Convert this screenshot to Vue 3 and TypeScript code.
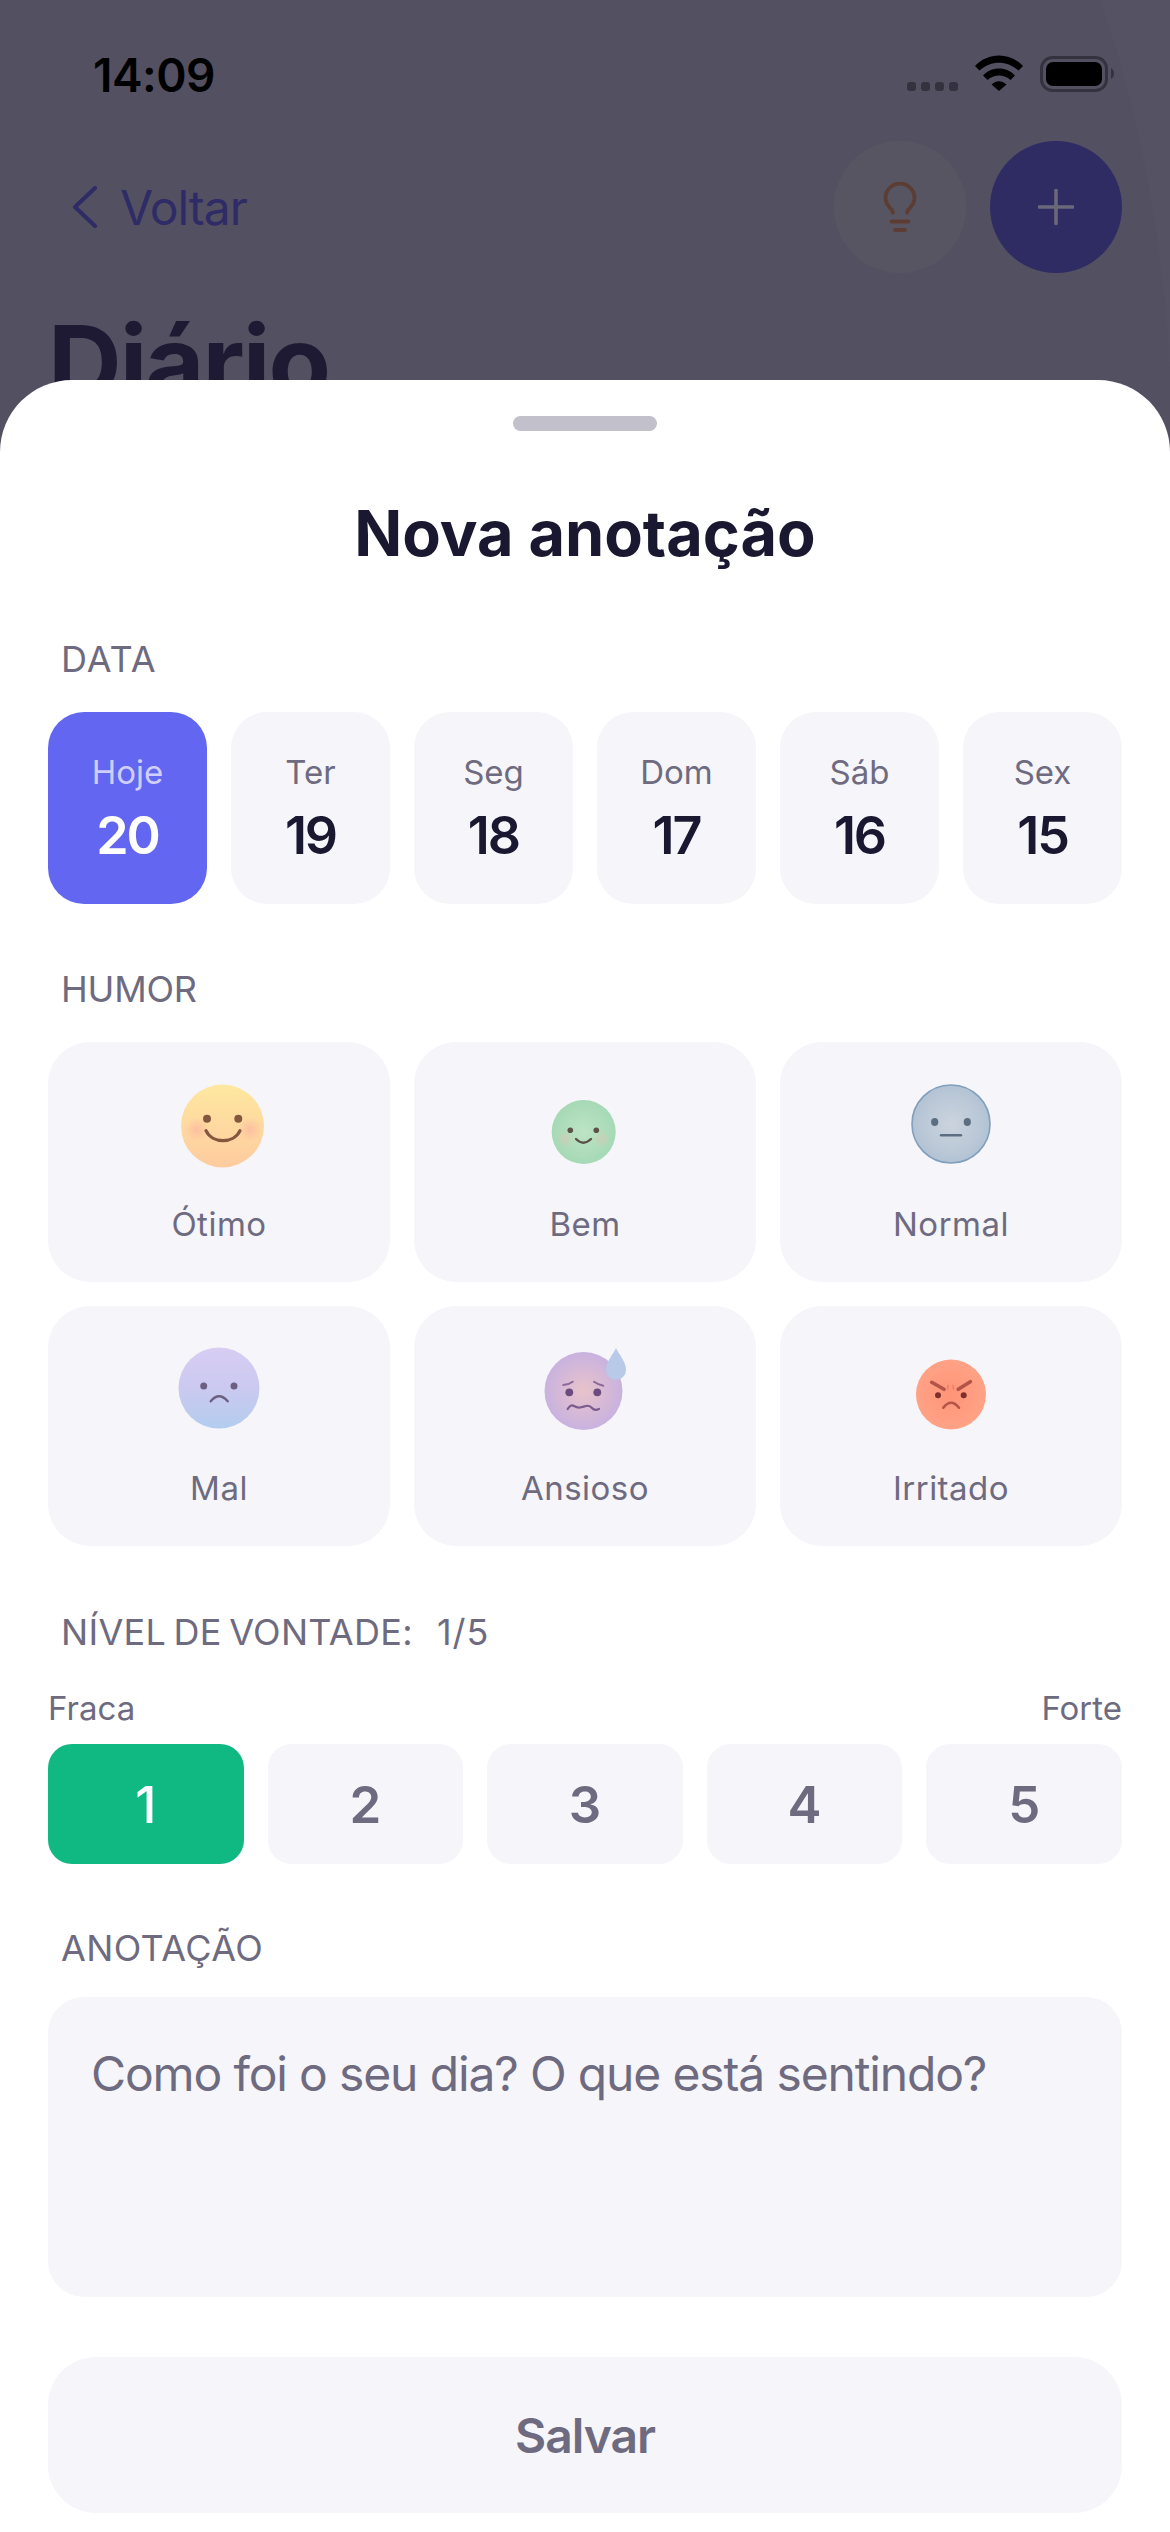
<script setup lang="ts">
const days = [
  { name: 'Hoje', num: 20, active: true },
  { name: 'Ter', num: 19, active: false },
  { name: 'Seg', num: 18, active: false },
  { name: 'Dom', num: 17, active: false },
  { name: 'Sáb', num: 16, active: false },
  { name: 'Sex', num: 15, active: false },
]
const moods = [
  { key: 'otimo', label: 'Ótimo' },
  { key: 'bem', label: 'Bem' },
  { key: 'normal', label: 'Normal' },
  { key: 'mal', label: 'Mal' },
  { key: 'ansioso', label: 'Ansioso' },
  { key: 'irritado', label: 'Irritado' },
]
const levels = [1, 2, 3, 4, 5]
</script>

<template>
  <div class="page">
    <svg class="edge" width="70" height="380" viewBox="0 0 70 380">
      <path d="M0 0 L70 0 L70 380 C65 250 40 110 0 0 Z" fill="#fff" opacity="0.012" />
    </svg>
    <div class="backdrop">
      <div class="status">
        <span class="time">14:09</span>
        <div class="status-icons">
          <svg width="52" height="10" viewBox="0 0 52 10" class="dots">
            <rect x="0" y="0" width="9" height="9" rx="3" />
            <rect x="14" y="0" width="9" height="9" rx="3" />
            <rect x="28" y="0" width="9" height="9" rx="3" />
            <rect x="42" y="0" width="9" height="9" rx="3" />
          </svg>
          <svg width="48" height="36" viewBox="0 0 48 36" class="wifi">
            <path d="M0 11 C13 -3 35 -3 48 11 L43.5 15.5 C32 5 16 5 4.5 15.5 Z" fill="#000" />
            <path d="M8 20.5 C16 11 32 11 40 20.5 L35.5 25 C29 19 19 19 12.5 25 Z" fill="#000" />
            <path d="M16.5 29.5 C21 25 27 25 31.5 29.5 L24 36 Z" fill="#000" />
          </svg>
          <svg width="75" height="36" viewBox="0 0 75 36" class="battery">
            <rect x="1.5" y="1.5" width="65" height="33" rx="11" fill="none" stroke="#35323f" stroke-width="3" />
            <rect x="6" y="6" width="56" height="24" rx="7" fill="#000" />
            <path d="M71 12 L71 23 C75 21 75 14 71 12 Z" fill="#35323f" />
          </svg>
        </div>
      </div>
      <div class="nav">
        <div class="back">
          <svg width="25" height="42" viewBox="0 0 25 42">
            <path d="M23 2 L3 21 L23 40" fill="none" stroke="#2e2b66" stroke-width="4" stroke-linecap="round" stroke-linejoin="round" />
          </svg>
          <span>Voltar</span>
        </div>
        <div class="nav-actions">
          <div class="round bulb">
            <svg width="36" height="51" viewBox="0 0 36 51">
              <path d="M11 30.5 C10 26 3.5 24 3.5 16 A14.5 14.5 0 0 1 32.5 16 C32.5 24 26 26 25 30.5" fill="none" stroke="#5c3d34" stroke-width="3.8" stroke-linecap="round" />
              <path d="M9.5 39.5 H26.5" fill="none" stroke="#5c3d34" stroke-width="3.8" stroke-linecap="round" />
              <path d="M13 48 H23" fill="none" stroke="#5c3d34" stroke-width="3.8" stroke-linecap="round" />
            </svg>
          </div>
          <div class="round plus">
            <svg width="36" height="36" viewBox="0 0 36 36">
              <path d="M18 1.5 V34.5 M1.5 18 H34.5" fill="none" stroke="#6b6879" stroke-width="3.6" stroke-linecap="round" />
            </svg>
          </div>
        </div>
      </div>
      <div class="big-title">Diário</div>
    </div>

    <section class="sheet">
      <div class="grip"></div>
      <h1 class="title">Nova anotação</h1>

      <div class="label label-data">DATA</div>
      <div class="days">
        <div v-for="d in days" :key="d.num" class="day" :class="{ active: d.active }">
          <span class="day-name">{{ d.name }}</span>
          <span class="day-num">{{ d.num }}</span>
        </div>
      </div>

      <div class="label label-humor">HUMOR</div>
      <div class="moods">
        <div v-for="m in moods" :key="m.key" class="mood">
          <svg class="face" width="120" height="100" viewBox="0 0 120 100">
            <defs>
              <linearGradient id="g-otimo" x1="0" y1="0" x2="0" y2="1">
                <stop offset="0" stop-color="#fee8a0" /><stop offset="1" stop-color="#fecb9f" />
              </linearGradient>
              <radialGradient id="g-bem">
                <stop offset="0" stop-color="#bde4c4" /><stop offset="1" stop-color="#a6d9b6" />
              </radialGradient>
              <radialGradient id="g-normal">
                <stop offset="0" stop-color="#ccd4de" /><stop offset="1" stop-color="#b3c3d4" />
              </radialGradient>
              <linearGradient id="g-mal" x1="0" y1="0" x2="0" y2="1">
                <stop offset="0" stop-color="#d8cdf3" /><stop offset="0.5" stop-color="#cbc9f0" /><stop offset="1" stop-color="#b3cdee" />
              </linearGradient>
              <radialGradient id="g-ansioso">
                <stop offset="0" stop-color="#e9c3ca" /><stop offset="1" stop-color="#c8b2df" />
              </radialGradient>
              <radialGradient id="g-irritado">
                <stop offset="0" stop-color="#ff9478" /><stop offset="1" stop-color="#ffa286" />
              </radialGradient>
              <radialGradient id="g-cheek">
                <stop offset="0" stop-color="#fdaaa0" stop-opacity="0.55" /><stop offset="1" stop-color="#fdaaa0" stop-opacity="0" />
              </radialGradient>
              <radialGradient id="g-cheek2">
                <stop offset="0" stop-color="#f5b8b0" stop-opacity="0.4" /><stop offset="1" stop-color="#f5b8b0" stop-opacity="0" />
              </radialGradient>
            </defs>

            <template v-if="m.key === 'otimo'">
              <circle cx="63.5" cy="54" r="41.5" fill="url(#g-otimo)" />
              <circle cx="37.7" cy="57.3" r="12" fill="url(#g-cheek)" />
              <circle cx="91" cy="57.3" r="12" fill="url(#g-cheek)" />
              <circle cx="48" cy="46.7" r="4" fill="#85573f" />
              <circle cx="79.3" cy="46.7" r="4" fill="#85573f" />
              <path d="M47 58.7 C53 72 75 72 81 58.7" fill="none" stroke="#85573f" stroke-width="3.2" stroke-linecap="round" />
            </template>

            <template v-else-if="m.key === 'bem'">
              <circle cx="58.7" cy="60" r="32" fill="url(#g-bem)" />
              <circle cx="40" cy="67" r="9" fill="url(#g-cheek2)" />
              <circle cx="76.7" cy="67" r="9" fill="url(#g-cheek2)" />
              <circle cx="45.3" cy="58.3" r="2.8" fill="#5e5148" />
              <circle cx="71.3" cy="58.3" r="2.8" fill="#5e5148" />
              <path d="M51 67 Q58.3 74.5 66 67" fill="none" stroke="#5e5148" stroke-width="2.4" stroke-linecap="round" />
            </template>

            <template v-else-if="m.key === 'normal'">
              <circle cx="60" cy="52" r="39" fill="url(#g-normal)" stroke="#7f9fbc" stroke-width="1.6" />
              <ellipse cx="43.7" cy="50" rx="3.6" ry="4" fill="#5c6f82" />
              <ellipse cx="76.3" cy="50" rx="3.6" ry="4" fill="#5c6f82" />
              <path d="M50 63.3 L70 63.3" stroke="#5c6f82" stroke-width="2.4" stroke-linecap="round" />
            </template>

            <template v-else-if="m.key === 'mal'">
              <circle cx="60" cy="52" r="40.5" fill="url(#g-mal)" />
              <circle cx="44.7" cy="50" r="3.5" fill="#6b6082" />
              <circle cx="75" cy="50" r="3.5" fill="#6b6082" />
              <path d="M51.7 65.3 Q60 55.3 68.7 65.3" fill="none" stroke="#6b6082" stroke-width="2.4" stroke-linecap="round" />
            </template>

            <template v-else-if="m.key === 'ansioso'">
              <circle cx="58.5" cy="55" r="39" fill="url(#g-ansioso)" />
              <circle cx="44.3" cy="56.3" r="3.9" fill="#6a4c80" />
              <circle cx="72.3" cy="56.3" r="3.9" fill="#6a4c80" />
              <path d="M38.3 49 Q44 48.5 47.7 45.7" fill="none" stroke="#8a6a97" stroke-width="2" stroke-linecap="round" />
              <path d="M69 45.7 Q73 48.5 78.3 49.7" fill="none" stroke="#8a6a97" stroke-width="2" stroke-linecap="round" />
              <path d="M42.7 73 Q45.5 68 49 70 T55 71.5 T61 70 T67 72 T74 73" fill="none" stroke="#7b5a8e" stroke-width="2.2" stroke-linecap="round" />
              <path d="M91 12 C95 20 101 26 101 34 A10 10 0 0 1 81 34 C81 26 87 20 91 12 Z" fill="#b9c9e8" />
            </template>

            <template v-else>
              <circle cx="60" cy="58.5" r="35" fill="url(#g-irritado)" />
              <circle cx="47" cy="59.3" r="3" fill="#7d2f2b" />
              <circle cx="72.7" cy="59.3" r="3" fill="#7d2f2b" />
              <path d="M40.7 46.3 L53 53.3" stroke="#b25448" stroke-width="3.6" stroke-linecap="round" />
              <path d="M79.3 45.7 L67.3 53.3" stroke="#b25448" stroke-width="3.6" stroke-linecap="round" />
              <path d="M57 49.5 L56.6 53 M62 49.5 L62.4 53" stroke="#f07f62" stroke-width="1.6" stroke-linecap="round" />
              <path d="M52.3 71.7 Q60 61.7 68 71.7" fill="none" stroke="#b25448" stroke-width="2.6" stroke-linecap="round" />
            </template>
          </svg>
          <span class="mood-label">{{ m.label }}</span>
        </div>
      </div>

      <div class="label label-level"><span class="level-title">NÍVEL DE VONTADE:</span><span>1/5</span></div>
      <div class="scale"><span>Fraca</span><span>Forte</span></div>
      <div class="levels">
        <div v-for="n in levels" :key="n" class="level" :class="{ active: n === 1 }">{{ n }}</div>
      </div>

      <div class="label label-note">ANOTAÇÃO</div>
      <div class="note">Como foi o seu dia? O que está sentindo?</div>

      <div class="save">Salvar</div>
    </section>
  </div>
</template>

<style>
html, body { margin: 0; padding: 0; }
</style>

<style scoped>
.page {
  position: relative;
  width: 1170px;
  height: 2532px;
  overflow: hidden;
  background: #535062;
  font-family: Inter, "Noto Sans", sans-serif;
}
.edge { position: absolute; left: 1100px; top: 0; }
.backdrop { position: relative; padding: 55px 48px 0 48px; display: flex; flex-direction: column; }
.status { display: flex; justify-content: space-between; align-items: flex-start; height: 40px; padding: 0 7px 0 45px; }
.time { font-size: 46px; font-weight: 600; line-height: 40px; color: #000; letter-spacing: -0.5px; }
.status-icons { display: flex; align-items: flex-start; }
.dots { margin-top: 27px; fill: #35323f; margin-right: 16px; }
.wifi { margin-top: 0; margin-right: 17px; }
.battery { margin-top: 1px; }
.nav { display: flex; justify-content: space-between; align-items: center; margin-top: 46px; height: 132px; }
.back { display: flex; align-items: center; gap: 23px; padding-left: 24px; font-size: 48px; color: #2e2b66; letter-spacing: -1px; }
.nav-actions { display: flex; gap: 24px; }
.round { width: 132px; height: 132px; border-radius: 50%; display: flex; align-items: center; justify-content: center; }
.bulb { background: #585563; }
.plus { background: #2f2b63; }
.big-title { font-size: 102px; font-weight: 700; color: #1e1a33; line-height: 120px; margin-top: 29px; letter-spacing: -2px; }

.sheet {
  position: absolute;
  left: 0; right: 0; top: 380px; bottom: 0;
  background: #fff;
  border-radius: 72px 72px 0 0;
  padding: 36px 48px 0;
  display: flex;
  flex-direction: column;
}
.grip { width: 144px; height: 15px; border-radius: 8px; background: #c2c0cb; align-self: center; }
.title { margin: 62px 0 0; font-size: 63px; line-height: 80px; font-weight: 700; color: #1a1730; text-align: center; }
.label { font-size: 36px; line-height: 44px; color: #6e6b80; padding-left: 13px; letter-spacing: 1px; }
.label-data { margin-top: 64px; }
.days { display: flex; gap: 24px; margin-top: 31px; }
.day { flex: 1; height: 192px; border-radius: 36px; background: #f5f5fa; display: flex; flex-direction: column; align-items: center; padding-top: 40px; box-sizing: border-box; color: #1a1730; }
.day.active { background: #6366f1; color: #fff; }
.day-name { font-size: 33px; line-height: 40px; color: #6e6b80; }
.day.active .day-name { color: rgba(255, 255, 255, 0.7); }
.day-num { font-size: 52px; line-height: 64px; font-weight: 600; margin-top: 12px; letter-spacing: -2px; }
.label-humor { margin-top: 63px; letter-spacing: -0.2px; }
.moods { display: grid; grid-template-columns: repeat(3, 1fr); gap: 24px; margin-top: 31px; }
.mood { height: 240px; border-radius: 42px; background: #f5f5fa; display: flex; flex-direction: column; align-items: center; padding-top: 30px; box-sizing: border-box; }
.face { display: block; overflow: visible; }
.mood-label { margin-top: 30px; font-size: 33px; line-height: 44px; color: #6e6b80; letter-spacing: 0.5px; }
.label-level { margin-top: 64px; display: flex; gap: 24px; }
.level-title { word-spacing: -3px; letter-spacing: 0.3px; }
.scale { display: flex; justify-content: space-between; margin-top: 34px; font-size: 33px; line-height: 40px; color: #6e6b80; }
.levels { display: flex; gap: 24px; margin-top: 16px; }
.level { flex: 1; height: 120px; border-radius: 24px; background: #f5f5fa; display: flex; align-items: center; justify-content: center; font-size: 51px; font-weight: 600; color: #6e6b80; }
.level.active { background: #10b981; color: #fff; font-weight: 500; }
.label-note { margin-top: 62px; letter-spacing: 0.4px; }
.note { margin-top: 27px; height: 300px; box-sizing: border-box; border-radius: 36px; background: #f5f5fa; padding: 48px 43px; font-size: 48px; line-height: 58px; color: #6e6b80; letter-spacing: -1.15px; }
.save { margin-top: 60px; height: 156px; border-radius: 48px; background: #f5f5fa; display: flex; align-items: center; justify-content: center; font-size: 48px; font-weight: 600; color: #6e6b80; letter-spacing: -1px; }
</style>
